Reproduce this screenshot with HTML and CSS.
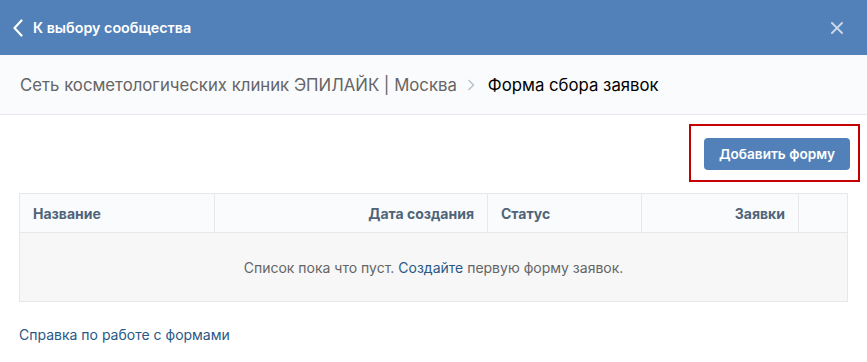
FILE: index.html
```html
<!DOCTYPE html>
<html lang="ru">
<head>
<meta charset="utf-8">
<link rel="stylesheet" href="styles.css">
</head>
<body>
<div class="page">
  <div class="header">
    <a class="back">
      <svg class="back-icon" width="12" height="18" viewBox="0 0 12 18"><path d="M9.5 1.5 L2.5 9 L9.5 16.5" fill="none" stroke="#fff" stroke-width="2.2" stroke-linecap="round" stroke-linejoin="round"/></svg>
      <span>К выбору сообщества</span>
    </a>
    <svg class="close" width="12" height="12" viewBox="0 0 12 12"><path d="M1 1 L11 11 M11 1 L1 11" stroke="#c8d6ea" stroke-width="2" stroke-linecap="round"/></svg>
  </div>
  <div class="crumbs">
    <span class="crumb">Сеть косметологических клиник ЭПИЛАЙК | Москва</span>
    <svg class="sep" width="8" height="12" viewBox="0 0 8 12"><path d="M1.5 1 L6.5 6 L1.5 11" fill="none" stroke="#b8bfc7" stroke-width="1.4"/></svg>
    <span class="crumb-current">Форма сбора заявок</span>
  </div>
  <div class="content">
    <div class="actions">
      <div class="highlight">
        <button class="btn">Добавить форму</button>
      </div>
    </div>
    <div class="table">
      <div class="row head">
        <div class="cell c1">Название</div>
        <div class="cell c2 right">Дата создания</div>
        <div class="cell c3">Статус</div>
        <div class="cell c4 right">Заявки</div>
        <div class="cell c5"></div>
      </div>
      <div class="empty">Список пока что пуст. <a class="link">Создайте</a> первую форму заявок.</div>
    </div>
    <a class="link help">Справка по работе с формами</a>
  </div>
</div>
</body>
</html>
```

FILE: styles.css
```css
* { box-sizing: border-box; }
html, body { margin: 0; padding: 0; background: #fff; }
body { font-family: Inter, Roboto, sans-serif; -webkit-font-smoothing: antialiased; }
.page { width: 867px; height: 362px; overflow: hidden; }

.header {
  height: 55px;
  background: #5181b8;
  display: flex;
  align-items: center;
  justify-content: space-between;
  padding: 0 24px 0 12px;
}
.back { display: flex; align-items: center; color: #fff; font-size: 14.3px; font-weight: 600; }
.back-icon { margin-right: 9px; }
.close { display: block; }

.crumbs {
  height: 60px;
  background: #fafbfc;
  border-bottom: 1px solid #e7e8ec;
  display: flex;
  align-items: center;
  padding-left: 20px;
  font-size: 16.75px;
}
.crumb { color: #656565; }
.sep { margin: 0 13px 0 10px; }
.crumb-current { color: #000; }

.content { padding: 0 19px; }
.actions { display: flex; justify-content: flex-end; padding-top: 9px; }
.highlight {
  border: 2px solid #c40000;
  padding: 12px 8px 10px 13px;
  margin-right: -12px;
}
.btn {
  display: block;
  width: 146px;
  height: 32px;
  border: 0;
  border-radius: 4px;
  background: #5181b8;
  color: #fff;
  font-family: inherit;
  font-size: 13.6px;
  font-weight: 600;
  padding: 0;
}

.table { margin-top: 11px; border: 1px solid #e7e8ec; }
.row { display: flex; }
.head { height: 39px; background: #fafbfc; border-bottom: 1px solid #e7e8ec; }
.cell {
  display: flex;
  align-items: center;
  padding: 0 13px;
  font-size: 14px;
  font-weight: 700;
  color: #4f6479;
  border-right: 1px solid #e7e8ec;
}
.cell.right { justify-content: flex-end; }
.c1 { width: 195px; }
.c2 { width: 273px; }
.c3 { width: 154px; }
.c4 { width: 157px; }
.c5 { flex: 1; border-right: 0; }
.empty {
  height: 68px;
  background: #f7f7f7;
  display: flex;
  align-items: center;
  justify-content: center;
  font-size: 14px;
  color: #656565;
  white-space: pre;
}
.link { color: #2a5885; text-decoration: none; }
.help { display: inline-block; margin-top: 24px; font-size: 14px; }
```
